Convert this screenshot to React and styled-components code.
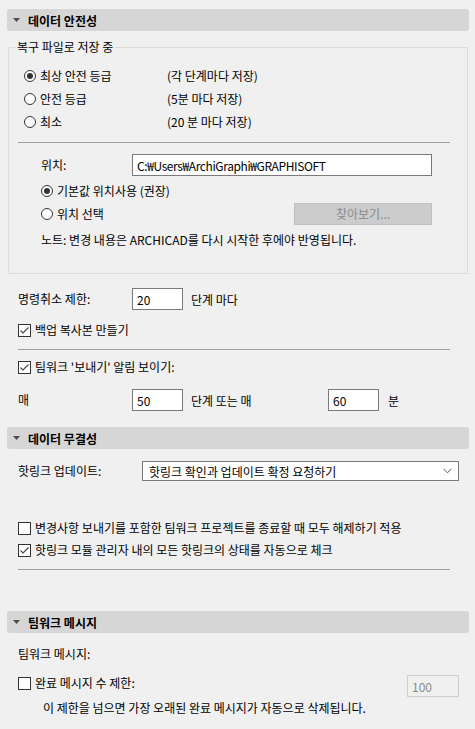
import React from "react";
import styled, { createGlobalStyle } from "styled-components";

const Global = createGlobalStyle`
  html, body { margin: 0; padding: 0; background: #f0f0f0; }
  body {
    font-family: "Noto Sans CJK KR", "Noto Sans", sans-serif;
    font-size: 12px;
    color: #000;
  }
  * { box-sizing: border-box; }
`;

const Page = styled.div`
  width: 475px;
  height: 729px;
  padding: 9px 6px 0 7px;
  display: flex;
  flex-direction: column;
  overflow: hidden;
`;

const Header = styled.div`
  height: 22px;
  flex: none;
  background: #d6d6d6;
  border-radius: 3px;
  display: flex;
  align-items: center;
  padding-left: 6px;
  margin-top: ${(p) => p.$mt || 0}px;
  font-weight: 700;
  gap: 8px;
`;

const Tri = () => (
  <svg width="7" height="4" viewBox="0 0 7 4">
    <polygon points="0,0 7,0 3.5,4" fill="#505050" />
  </svg>
);

const Group = styled.fieldset`
  margin: 8px 1px 0 1px;
  border: 1px solid #dcdcdc;
  padding: 0 17px 22px 9px;
  min-width: 0;
`;

const Legend = styled.legend`
  padding: 0 2px;
  margin-left: -3px;
  line-height: 16px;
`;

const Section = styled.div`
  padding: 0 10px 0 11px;
  display: flex;
  flex-direction: column;
`;

const Row = styled.div`
  display: flex;
  align-items: ${(p) => p.$align || "center"};
  height: ${(p) => p.$h || 22}px;
  margin-top: ${(p) => p.$mt || 0}px;
  padding-left: ${(p) => p.$indent || 0}px;
  flex: none;
`;

const Label = styled.span`
  width: ${(p) => (p.$w ? p.$w + "px" : "auto")};
  flex: none;
  white-space: nowrap;
  line-height: 16px;
`;

const Sep = styled.div`
  height: 1px;
  background: #a0a0a0;
  margin-top: ${(p) => p.$mt || 0}px;
  width: 432px;
  flex: none;
`;

const Input = styled.div`
  width: ${(p) => p.$w}px;
  height: ${(p) => p.$h || 22}px;
  flex: none;
  border: 1px solid ${(p) => (p.$disabled ? "#cfcfcf" : "#7a7a7a")};
  background: ${(p) => (p.$disabled ? "#f0f0f0" : "#fff")};
  color: ${(p) => (p.$disabled ? "#8a8a8a" : "#000")};
  display: flex;
  align-items: center;
  padding-left: 4px;
  margin-left: ${(p) => (p.$auto ? "auto" : (p.$ml || 0) + "px")};
  letter-spacing: ${(p) => p.$ls || 0}px;
  white-space: nowrap;
  overflow: hidden;
`;

const Select = styled(Input)`
  padding-left: 6px;
  padding-right: 6px;
  justify-content: space-between;
`;

const Button = styled.div`
  width: 138px;
  height: 22px;
  flex: none;
  background: #cccccc;
  border: 1px solid #bfbfbf;
  color: #8a8a8a;
  display: flex;
  align-items: center;
  justify-content: center;
  margin-left: auto;
  margin-right: 18px;
`;

const Unit = styled.span`
  margin-left: ${(p) => p.$ml ?? 8}px;
  width: ${(p) => (p.$w ? p.$w + "px" : "auto")};
  flex: none;
  white-space: nowrap;
`;

const RadioCircle = styled.span`
  width: 12px;
  height: 12px;
  border-radius: 50%;
  border: 1px solid #333;
  background: #fff;
  flex: none;
  display: flex;
  align-items: center;
  justify-content: center;
  margin-right: 4px;
  &::after {
    content: "";
    width: 6px;
    height: 6px;
    border-radius: 50%;
    background: ${(p) => (p.$on ? "#333" : "transparent")};
  }
`;

const RadioWrap = styled.span`
  display: flex;
  align-items: center;
  width: ${(p) => (p.$w ? p.$w + "px" : "auto")};
  flex: none;
  white-space: nowrap;
`;

const Radio = ({ on, w, children }) => (
  <RadioWrap $w={w}>
    <RadioCircle $on={on} />
    {children}
  </RadioWrap>
);

const Box = styled.span`
  width: 13px;
  height: 13px;
  border: 1px solid #333;
  background: #fff;
  flex: none;
  display: flex;
  align-items: center;
  justify-content: center;
  margin-right: 4px;
`;

const CheckWrap = styled.span`
  display: flex;
  align-items: center;
  white-space: nowrap;
  line-height: 16px;
  flex: none;
`;

const Check = ({ on, children }) => (
  <CheckWrap>
    <Box>
      {on && (
        <svg width="11" height="11" viewBox="0 0 11 11">
          <polyline points="1.5,5.5 4,8 9.5,2.5" fill="none" stroke="#444" strokeWidth="1.1" />
        </svg>
      )}
    </Box>
    {children}
  </CheckWrap>
);

const Chevron = () => (
  <svg width="9" height="6" viewBox="0 0 9 6">
    <polyline points="0.5,0.8 4.5,4.8 8.5,0.8" fill="none" stroke="#555" strokeWidth="1" />
  </svg>
);

export default function App() {
  return (
    <>
      <Global />
      <Page>
        <Header>
          <Tri />
          데이터 안전성
        </Header>
        <Group>
          <Legend>복구 파일로 저장 중</Legend>
          <Row $h={23} $mt={9} $indent={6}>
            <Radio on w={143}>최상 안전 등급</Radio>
            <span>(각 단계마다 저장)</span>
          </Row>
          <Row $h={23} $indent={6}>
            <Radio w={143}>안전 등급</Radio>
            <span>(5분 마다 저장)</span>
          </Row>
          <Row $h={23} $indent={6}>
            <Radio w={143}>최소</Radio>
            <span>(20 분 마다 저장)</span>
          </Row>
          <Sep $mt={9} />
          <Row $mt={11} $indent={23}>
            <Label $w={91}>위치:</Label>
            <Input $w={300} $ls={-0.4}>C:₩Users₩ArchiGraphi₩GRAPHISOFT</Input>
          </Row>
          <Row $h={23} $mt={3} $indent={23}>
            <Radio on>기본값 위치사용 (권장)</Radio>
          </Row>
          <Row $h={23} $indent={23}>
            <Radio>위치 선택</Radio>
            <Button>찾아보기...</Button>
          </Row>
          <Row $h={23} $mt={3} $indent={23}>
            <Label>노트: 변경 내용은 ARCHICAD를 다시 시작한 후에야 반영됩니다.</Label>
          </Row>
        </Group>
        <Section>
          <Row $mt={14}>
            <Label $w={114}>명령취소 제한:</Label>
            <Input $w={51}>20</Input>
            <Unit>단계 마다</Unit>
          </Row>
          <Row $mt={9}>
            <Check on>백업 복사본 만들기</Check>
          </Row>
          <Sep $mt={8} />
          <Row $mt={6}>
            <Check on>팀워크 '보내기' 알림 보이기:</Check>
          </Row>
          <Row $mt={11}>
            <Label $w={114}>매</Label>
            <Input $w={51}>50</Input>
            <Unit $ml={8} $w={137}>단계 또는 매</Unit>
            <Input $w={51}>60</Input>
            <Unit $ml={9}>분</Unit>
          </Row>
        </Section>
        <Header $mt={16}>
          <Tri />
          데이터 무결성
        </Header>
        <Section>
          <Row $mt={12} $h={20}>
            <Label $w={124}>핫링크 업데이트:</Label>
            <Select $w={317} $h={20}>
              <span>핫링크 확인과 업데이트 확정 요청하기</span>
              <Chevron />
            </Select>
          </Row>
          <Row $mt={36}>
            <Check>변경사항 보내기를 포함한 팀워크 프로젝트를 종료할 때 모두 해제하기 적용</Check>
          </Row>
          <Row>
            <Check on>핫링크 모듈 관리자 내의 모든 핫링크의 상태를 자동으로 체크</Check>
          </Row>
          <Sep $mt={8} />
        </Section>
        <Header $mt={41}>
          <Tri />
          팀워크 메시지
        </Header>
        <Section>
          <Row $mt={10}>
            <Label>팀워크 메시지:</Label>
          </Row>
          <Row $mt={10} $align="flex-start">
            <Check>완료 메시지 수 제한:</Check>
            <Input $w={52} $disabled $auto>100</Input>
          </Row>
          <Row $indent={25}>
            <Label>이 제한을 넘으면 가장 오래된 완료 메시지가 자동으로 삭제됩니다.</Label>
          </Row>
        </Section>
      </Page>
    </>
  );
}
